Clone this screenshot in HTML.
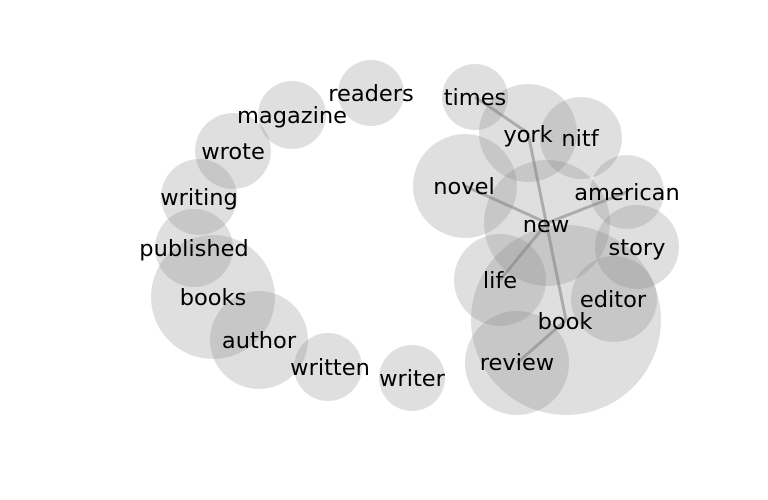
<!DOCTYPE html>
<html><head><style>body{margin:0;background:#fff}svg{display:block}</style></head><body>
<svg width="768" height="500" xmlns="http://www.w3.org/2000/svg">
<g fill="#808080" fill-opacity="0.25">
<circle cx="371" cy="93" r="33"/><circle cx="292" cy="115" r="34"/><circle cx="233" cy="151" r="38"/>
<circle cx="199" cy="197" r="38"/><circle cx="194" cy="248" r="39"/><circle cx="213" cy="297" r="62"/>
<circle cx="259" cy="340" r="49"/><circle cx="328" cy="367" r="34"/><circle cx="412" cy="378" r="33"/>
<circle cx="475" cy="97" r="33"/><circle cx="528" cy="133" r="49"/><circle cx="581" cy="138" r="41"/>
<circle cx="465" cy="186" r="52"/><circle cx="547" cy="223" r="63"/><circle cx="627" cy="192" r="37"/>
<circle cx="637" cy="247" r="42"/><circle cx="500" cy="280" r="46"/><circle cx="566" cy="320" r="95"/>
<circle cx="614" cy="299" r="43"/><circle cx="517" cy="363" r="52"/>
</g>
<g stroke="#808080" stroke-opacity="0.55" stroke-width="3" fill="none">
<line x1="475" y1="97" x2="528" y2="133"/><line x1="528" y1="133" x2="566" y2="320"/>
<line x1="465" y1="186" x2="547" y2="223"/><line x1="547" y1="223" x2="627" y2="192"/>
<line x1="547" y1="223" x2="500" y2="280"/><line x1="566" y1="320" x2="517" y2="363"/>
</g>
<g font-family="DejaVu Sans, sans-serif" font-size="22.5" text-anchor="middle" fill="#000" dominant-baseline="central" transform="translate(0,1)">
<text x="371" y="93">readers</text><text x="292" y="115">magazine</text><text x="233" y="151">wrote</text>
<text x="199" y="197">writing</text><text x="194" y="248">published</text><text x="213" y="297">books</text>
<text x="259" y="340">author</text><text x="330" y="367">written</text><text x="412" y="378">writer</text>
<text x="475" y="97">times</text><text x="528" y="134">york</text><text x="580" y="138">nitf</text>
<text x="464" y="186">novel</text><text x="546" y="224">new</text><text x="627" y="192">american</text>
<text x="637" y="247">story</text><text x="500" y="280">life</text><text x="565" y="321">book</text>
<text x="613" y="299">editor</text><text x="517" y="362">review</text>
</g>
</svg>
</body></html>
